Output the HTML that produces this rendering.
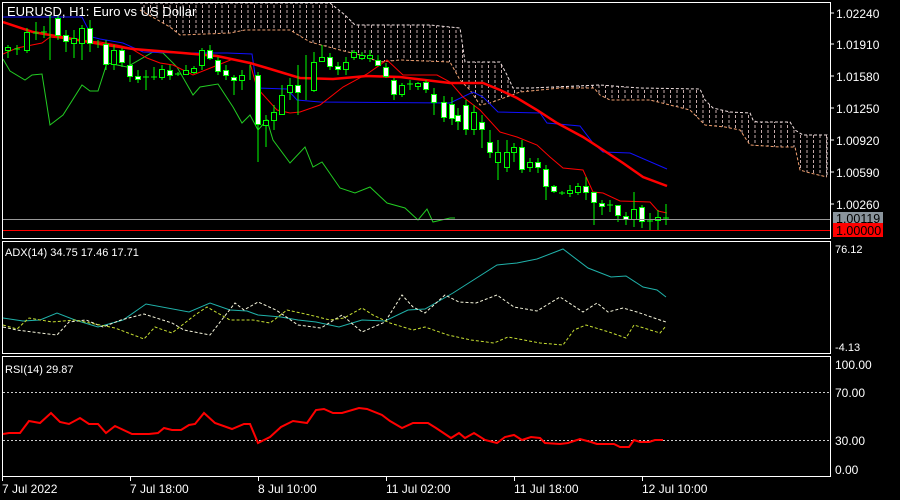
<!DOCTYPE html>
<html><head><meta charset="utf-8"><style>
html,body{margin:0;padding:0;background:#000;width:900px;height:500px;overflow:hidden}
svg{display:block}
text{font-family:"Liberation Sans",sans-serif;fill:#fff;font-size:12px}
</style></head><body>
<svg width="900" height="500" viewBox="0 0 900 500" xmlns="http://www.w3.org/2000/svg">
<defs>
<pattern id="vd" width="6.5" height="5" patternUnits="userSpaceOnUse">
<line x1="1" y1="0" x2="1" y2="3" stroke="#e8c8c8" stroke-width="1"/>
</pattern>
<clipPath id="mc"><rect x="3" y="3" width="827" height="235"/></clipPath>
</defs>
<rect width="900" height="500" fill="#000"/>
<g clip-path="url(#mc)">
<polygon fill="url(#vd)" opacity="0.85" points="140,3 330,3 345,15 355,25 430,25 450,27 460,28 465,62 500,62 507,75 513,88 530,88 600,85 640,88 700,89 705,100 713,108 730,112 750,113 753,120 757,122 790,122 795,130 803,135 827,135 827,177 810,173 800,170 795,147 780,147 750,145 740,130 725,127 705,125 690,110 650,100 610,100 600,95 594,88 560,88 520,92 490,103 480,105 470,90 460,80 450,62 400,60 380,62 360,55 340,50 310,42 290,30 245,30 230,33 180,35 170,27 140,10"/>
<polyline fill="none" stroke="#f0e0e0" stroke-width="1" stroke-dasharray="3,2" points="140,3 330,3 345,15 355,25 430,25 450,27 460,28 465,62 500,62 507,75 513,88 530,88 600,85 640,88 700,89 705,100 713,108 730,112 750,113 753,120 757,122 790,122 795,130 803,135 827,135 827,177"/>
<polyline fill="none" stroke="#f0a070" stroke-width="1" stroke-dasharray="3,2" points="140,10 170,27 180,35 230,33 245,30 290,30 310,42 340,50 360,55 380,62 400,60 450,62 460,80 470,90 480,105 490,103 520,92 560,88 594,88 600,95 610,100 650,100 690,110 705,125 725,127 740,130 750,145 780,147 795,147 800,170 810,173 827,177"/>
<polyline fill="none" stroke="#22cc22" stroke-width="1" points="3,59 10,71 25,80 32,75 42,74 50,125 63,115 82,85 90,91 98,91 107,63 127,67 153,52 163,53 177,67 193,95 200,87 218,84 233,107 242,123 250,115 258,130 267,120 273,140 290,163 305,147 313,167 322,162 340,188 355,193 370,187 387,203 405,208 418,220 427,209 433,222 450,218 455,218"/>
<polyline fill="none" stroke="#1010ff" stroke-width="1" points="3,17 82,17 92,37 100,39 123,43 143,52 177,53 227,53 252,54 257,88 287,89 297,100 320,102 450,103 473,92 483,97 498,112 540,113 547,123 580,126 593,143 603,152 630,153 667,169"/>
<polyline fill="none" stroke="#ff0000" stroke-width="1" points="3,54 17,48 42,43 50,37 67,39 100,42 117,45 130,48 147,58 160,63 173,65 193,75 213,67 233,59 250,63 257,88 277,110 290,113 300,112 320,105 343,87 367,74 387,60 403,75 437,75 450,82 463,97 480,110 500,132 517,137 537,145 550,157 563,168 583,170 593,192 603,193 620,201 650,202 658,211 667,213"/>
<polyline fill="none" stroke="#ff0000" stroke-width="2.5" points="3,22 33,32 50,35 67,38 100,44 133,49 183,53 217,56 250,63 267,68 300,78 333,79 367,76 400,77 450,83 483,83 500,90 517,98 537,110 557,123 583,137 600,148 623,163 643,177 667,186"/>
<g stroke="#00ff00" stroke-width="1">
<line x1="8" y1="45" x2="8" y2="58"/><rect x="5.5" y="47.5" width="5" height="3" fill="#000"/>
<line x1="17" y1="45" x2="17" y2="55"/><line x1="14" y1="49" x2="20" y2="49"/>
<line x1="27" y1="28" x2="27" y2="53"/><rect x="24.5" y="32.5" width="5" height="18" fill="#000"/>
<line x1="36" y1="22" x2="36" y2="40"/><line x1="33" y1="33" x2="39" y2="33"/>
<line x1="44" y1="26" x2="44" y2="38"/><line x1="41" y1="32" x2="47" y2="32"/>
<line x1="50" y1="15" x2="50" y2="60"/>
<line x1="58" y1="15" x2="58" y2="40"/><rect x="55.5" y="18.5" width="5" height="17" fill="#fff"/>
<line x1="66" y1="30" x2="66" y2="52"/><rect x="63.5" y="35.5" width="5" height="6" fill="#fff"/>
<line x1="74" y1="30" x2="74" y2="58"/><rect x="71.5" y="38.5" width="5" height="5" fill="#000"/>
<line x1="82" y1="25" x2="82" y2="60"/><rect x="79.5" y="28.5" width="5" height="15" fill="#000"/>
<line x1="90" y1="20" x2="90" y2="52"/><rect x="87.5" y="28.5" width="5" height="15" fill="#fff"/>
<line x1="98" y1="40" x2="98" y2="48"/>
<line x1="106" y1="40" x2="106" y2="70"/><rect x="103.5" y="44.5" width="5" height="20" fill="#fff"/>
<line x1="114" y1="45" x2="114" y2="70"/><rect x="111.5" y="50.5" width="5" height="14" fill="#000"/>
<line x1="122" y1="48" x2="122" y2="67"/><rect x="119.5" y="50.5" width="5" height="12" fill="#fff"/>
<line x1="130" y1="55" x2="130" y2="82"/><rect x="127.5" y="65.5" width="5" height="11" fill="#fff"/>
<line x1="138" y1="70" x2="138" y2="83"/><rect x="135.5" y="76.5" width="5" height="3" fill="#fff"/>
<line x1="146" y1="70" x2="146" y2="90"/><line x1="143" y1="77" x2="149" y2="77"/>
<line x1="154" y1="67" x2="154" y2="80"/><line x1="151" y1="77" x2="157" y2="77"/>
<line x1="162" y1="65" x2="162" y2="80"/><rect x="159.5" y="69.5" width="5" height="8" fill="#000"/>
<line x1="170" y1="65" x2="170" y2="80"/><rect x="167.5" y="70.5" width="5" height="5" fill="#fff"/>
<line x1="178" y1="72" x2="178" y2="76"/><line x1="175" y1="74" x2="181" y2="74"/>
<line x1="186" y1="65" x2="186" y2="75"/><rect x="183.5" y="70.5" width="5" height="4" fill="#000"/>
<line x1="194" y1="66" x2="194" y2="74"/><rect x="191.5" y="68.5" width="5" height="4" fill="#000"/>
<line x1="202" y1="48" x2="202" y2="70"/><rect x="199.5" y="50.5" width="5" height="15" fill="#000"/>
<line x1="210" y1="45" x2="210" y2="60"/><rect x="207.5" y="50.5" width="5" height="8" fill="#fff"/>
<line x1="218" y1="57" x2="218" y2="75"/><rect x="215.5" y="60.5" width="5" height="11" fill="#fff"/>
<line x1="226" y1="65" x2="226" y2="80"/><rect x="223.5" y="70.5" width="5" height="5" fill="#fff"/>
<line x1="234" y1="75" x2="234" y2="95"/><rect x="231.5" y="77.5" width="5" height="3" fill="#fff"/>
<line x1="242" y1="70" x2="242" y2="90"/><rect x="239.5" y="75.5" width="5" height="5" fill="#000"/>
<line x1="250" y1="65" x2="250" y2="80"/>
<line x1="258" y1="72" x2="258" y2="162"/><rect x="255.5" y="75.5" width="5" height="49" fill="#fff"/>
<line x1="266" y1="115" x2="266" y2="147"/><rect x="263.5" y="120.5" width="5" height="5" fill="#000"/>
<line x1="274" y1="105" x2="274" y2="130"/><rect x="271.5" y="112.5" width="5" height="8" fill="#000"/>
<line x1="282" y1="85" x2="282" y2="115"/><rect x="279.5" y="95.5" width="5" height="19" fill="#000"/>
<line x1="290" y1="78" x2="290" y2="100"/><rect x="287.5" y="85.5" width="5" height="7" fill="#000"/>
<line x1="298" y1="65" x2="298" y2="115"/><rect x="295.5" y="85.5" width="5" height="7" fill="#fff"/>
<line x1="306" y1="55" x2="306" y2="100"/>
<line x1="314" y1="52" x2="314" y2="92"/><rect x="311.5" y="62.5" width="5" height="28" fill="#000"/>
<line x1="322" y1="45" x2="322" y2="62"/><rect x="319.5" y="57.5" width="5" height="4" fill="#000"/>
<line x1="330" y1="53" x2="330" y2="70"/><rect x="327.5" y="57.5" width="5" height="9" fill="#fff"/>
<line x1="338" y1="62" x2="338" y2="75"/><rect x="335.5" y="66.5" width="5" height="3" fill="#fff"/>
<line x1="346" y1="57" x2="346" y2="75"/><rect x="343.5" y="62.5" width="5" height="7" fill="#000"/>
<line x1="354" y1="50" x2="354" y2="60"/><rect x="351.5" y="52.5" width="5" height="5" fill="#000"/>
<line x1="362" y1="52" x2="362" y2="60"/><rect x="359.5" y="55.5" width="5" height="3" fill="#000"/>
<line x1="370" y1="50" x2="370" y2="62"/><rect x="367.5" y="55.5" width="5" height="3" fill="#000"/>
<line x1="378" y1="55" x2="378" y2="66"/><rect x="375.5" y="60.5" width="5" height="5" fill="#fff"/>
<line x1="386" y1="63" x2="386" y2="78"/><rect x="383.5" y="67.5" width="5" height="9" fill="#fff"/>
<line x1="394" y1="78" x2="394" y2="100"/><rect x="391.5" y="80.5" width="5" height="14" fill="#fff"/>
<line x1="402" y1="83" x2="402" y2="97"/><rect x="399.5" y="85.5" width="5" height="9" fill="#000"/>
<line x1="410" y1="80" x2="410" y2="90"/><line x1="407" y1="84" x2="413" y2="84"/>
<line x1="418" y1="82" x2="418" y2="90"/><rect x="415.5" y="83.5" width="5" height="3" fill="#000"/>
<line x1="426" y1="80" x2="426" y2="93"/><rect x="423.5" y="82.5" width="5" height="7" fill="#fff"/>
<line x1="434" y1="88" x2="434" y2="115"/><rect x="431.5" y="94.5" width="5" height="8" fill="#fff"/>
<line x1="444" y1="96" x2="444" y2="122"/><rect x="441.5" y="102.5" width="5" height="15" fill="#fff"/>
<line x1="452" y1="97" x2="452" y2="125"/><rect x="449.5" y="104.5" width="5" height="14" fill="#fff"/>
<line x1="458" y1="108" x2="458" y2="130"/><rect x="455.5" y="115.5" width="5" height="6" fill="#fff"/>
<line x1="466" y1="100" x2="466" y2="135"/><rect x="463.5" y="105.5" width="5" height="24" fill="#fff"/>
<line x1="474" y1="105" x2="474" y2="135"/><rect x="471.5" y="112.5" width="5" height="17" fill="#000"/>
<line x1="482" y1="115" x2="482" y2="148"/><rect x="479.5" y="122.5" width="5" height="7" fill="#fff"/>
<line x1="490" y1="130" x2="490" y2="158"/><rect x="487.5" y="142.5" width="5" height="10" fill="#fff"/>
<line x1="498" y1="140" x2="498" y2="180"/><rect x="495.5" y="152.5" width="5" height="10" fill="#000"/>
<line x1="507" y1="140" x2="507" y2="172"/><rect x="504.5" y="152.5" width="5" height="15" fill="#000"/>
<line x1="514" y1="143" x2="514" y2="162"/><rect x="511.5" y="147.5" width="5" height="5" fill="#000"/>
<line x1="522" y1="140" x2="522" y2="173"/><rect x="519.5" y="147.5" width="5" height="22" fill="#fff"/>
<line x1="530" y1="158" x2="530" y2="172"/><rect x="527.5" y="162.5" width="5" height="5" fill="#000"/>
<line x1="538" y1="158" x2="538" y2="173"/><rect x="535.5" y="162.5" width="5" height="5" fill="#fff"/>
<line x1="546" y1="165" x2="546" y2="200"/><rect x="543.5" y="169.5" width="5" height="17" fill="#fff"/>
<line x1="554" y1="185" x2="554" y2="193"/><rect x="551.5" y="186.5" width="5" height="5" fill="#fff"/>
<line x1="562" y1="191" x2="562" y2="195"/><line x1="559" y1="193" x2="565" y2="193"/>
<line x1="570" y1="185" x2="570" y2="197"/><rect x="567.5" y="190.5" width="5" height="3" fill="#000"/>
<line x1="578" y1="183" x2="578" y2="195"/><rect x="575.5" y="186.5" width="5" height="6" fill="#000"/>
<line x1="586" y1="177" x2="586" y2="200"/><rect x="583.5" y="186.5" width="5" height="6" fill="#fff"/>
<line x1="594" y1="192" x2="594" y2="225"/><rect x="591.5" y="192.5" width="5" height="10" fill="#fff"/>
<line x1="602" y1="200" x2="602" y2="215"/><rect x="599.5" y="203.5" width="5" height="3" fill="#fff"/>
<line x1="610" y1="200" x2="610" y2="212"/><line x1="607" y1="205" x2="613" y2="205"/>
<line x1="618" y1="205" x2="618" y2="222"/><rect x="615.5" y="205.5" width="5" height="10" fill="#fff"/>
<line x1="626" y1="212" x2="626" y2="225"/><rect x="623.5" y="216.5" width="5" height="3" fill="#fff"/>
<line x1="634" y1="192" x2="634" y2="227"/><rect x="631.5" y="209.5" width="5" height="10" fill="#000"/>
<line x1="642" y1="205" x2="642" y2="228"/><rect x="639.5" y="207.5" width="5" height="14" fill="#fff"/>
<line x1="650" y1="213" x2="650" y2="230"/><line x1="647" y1="221" x2="653" y2="221"/>
<line x1="658" y1="210" x2="658" y2="230"/><rect x="655.5" y="217.5" width="5" height="3" fill="#000"/>
<line x1="666" y1="204" x2="666" y2="225"/><line x1="663" y1="218" x2="669" y2="218"/>
</g>
<line x1="3" y1="219.5" x2="830" y2="219.5" stroke="#999" stroke-width="1"/>
<line x1="3" y1="230.5" x2="830" y2="230.5" stroke="#ff0000" stroke-width="1"/>
</g>
<text x="7" y="16" style="font-size:13px">EURUSD, H1:  Euro vs US Dollar</text>
<rect x="2.5" y="2.5" width="828" height="236" fill="none" stroke="#fff"/>
<g stroke="#fff">
<line x1="830" y1="13" x2="834" y2="13"/><line x1="830" y1="44" x2="834" y2="44"/><line x1="830" y1="76" x2="834" y2="76"/><line x1="830" y1="108" x2="834" y2="108"/><line x1="830" y1="140" x2="834" y2="140"/><line x1="830" y1="172" x2="834" y2="172"/><line x1="830" y1="204" x2="834" y2="204"/>
</g>
<g style="font-size:12.5px">
<text x="836" y="18">1.02240</text><text x="836" y="49">1.01910</text><text x="836" y="81">1.01580</text><text x="836" y="113">1.01250</text><text x="836" y="145">1.00920</text><text x="836" y="177">1.00590</text><text x="836" y="209">1.00260</text>
</g>
<rect x="833" y="212" width="50" height="11" fill="#8a949c"/>
<text x="836" y="223" style="font-size:12.5px;fill:#000">1.00119</text>
<rect x="833" y="223" width="50" height="14" fill="#ff0000"/>
<text x="836" y="235" style="font-size:12.5px;fill:#000">1.00000</text>

<rect x="2.5" y="241.5" width="828" height="112" fill="none" stroke="#fff"/>
<text x="5" y="256" style="font-size:11px">ADX(14) 34.75 17.46 17.71</text>
<text x="835" y="253" style="font-size:11px">76.12</text>
<text x="835" y="351" style="font-size:11px">-4.13</text>
<polyline fill="none" stroke="#20b2aa" stroke-width="1" points="3,318 23,321 40,320 57,313 75,320 98,327 123,320 146,304 189,312 210,303 230,310 247,311 258,315 281,317 298,320 316,322 339,327 362,320 385,321 408,310 425,309 453,293 497,265 517,263 537,259 563,249 588,268 611,277 626,276 643,287 657,290 666,297"/>
<polyline fill="none" stroke="#f5f5dc" stroke-width="1" stroke-dasharray="3,2" points="3,327 17,330 40,333 57,335 69,322 86,320 103,327 121,320 144,314 172,323 184,330 210,335 224,317 235,303 244,310 258,302 276,310 298,325 321,328 342,315 362,332 385,322 402,295 413,307 425,313 445,295 459,302 476,303 497,295 514,307 537,311 560,297 583,312 597,303 608,312 623,308 637,312 660,320 666,322"/>
<polyline fill="none" stroke="#c8e032" stroke-width="1" stroke-dasharray="3,2" points="3,325 17,329 29,318 52,322 75,320 115,328 144,339 155,327 172,333 195,315 207,307 230,320 253,320 270,323 287,310 310,315 330,320 344,318 362,308 373,315 390,323 413,330 425,327 448,335 471,340 494,343 508,337 540,343 563,345 574,330 586,325 609,332 626,338 634,325 660,333 666,326"/>

<rect x="2.5" y="356.5" width="828" height="120" fill="none" stroke="#fff"/>
<text x="5" y="373" style="font-size:11px">RSI(14) 29.87</text>
<line x1="3" y1="392.5" x2="830" y2="392.5" stroke="#ccc" stroke-dasharray="2,2"/>
<line x1="3" y1="440.5" x2="830" y2="440.5" stroke="#ccc" stroke-dasharray="2,2"/>
<g style="font-size:11px">
<text x="835" y="369">100.00</text><text x="835" y="397">70.00</text><text x="835" y="445">30.00</text><text x="835" y="474">0.00</text>
</g>
<polyline fill="none" stroke="#ff0000" stroke-width="2" points="3,434 9,433 20,433 29,421 40,423 51,413 60,422 69,424 80,418 89,424 98,424 106,433 115,426 132,434 149,434 158,433 164,428 172,430 181,430 189,425 195,424 204,413 215,423 232,429 244,424 250,424 258,443 270,437 281,427 293,421 307,423 316,410 324,409 333,413 342,413 359,408 367,409 382,415 390,421 402,428 413,423 428,423 436,428 451,438 459,433 465,438 474,433 485,440 497,443 505,437 514,435 522,440 531,437 540,438 545,443 560,444 568,443 580,439 591,442 597,444 614,444 620,447 629,447 634,440 640,442 649,442 655,440 663,440"/>

<g stroke="#fff">
<line x1="2.5" y1="476" x2="2.5" y2="481"/><line x1="130.5" y1="476" x2="130.5" y2="481"/><line x1="258.5" y1="476" x2="258.5" y2="481"/><line x1="386.5" y1="476" x2="386.5" y2="481"/><line x1="514.5" y1="476" x2="514.5" y2="481"/><line x1="642.5" y1="476" x2="642.5" y2="481"/>
</g>
<g style="font-size:12.5px">
<text x="2" y="493">7 Jul 2022</text><text x="130" y="493">7 Jul 18:00</text><text x="258" y="493">8 Jul 10:00</text><text x="386" y="493">11 Jul 02:00</text><text x="514" y="493">11 Jul 18:00</text><text x="642" y="493">12 Jul 10:00</text>
</g>
</svg>
</body></html>
